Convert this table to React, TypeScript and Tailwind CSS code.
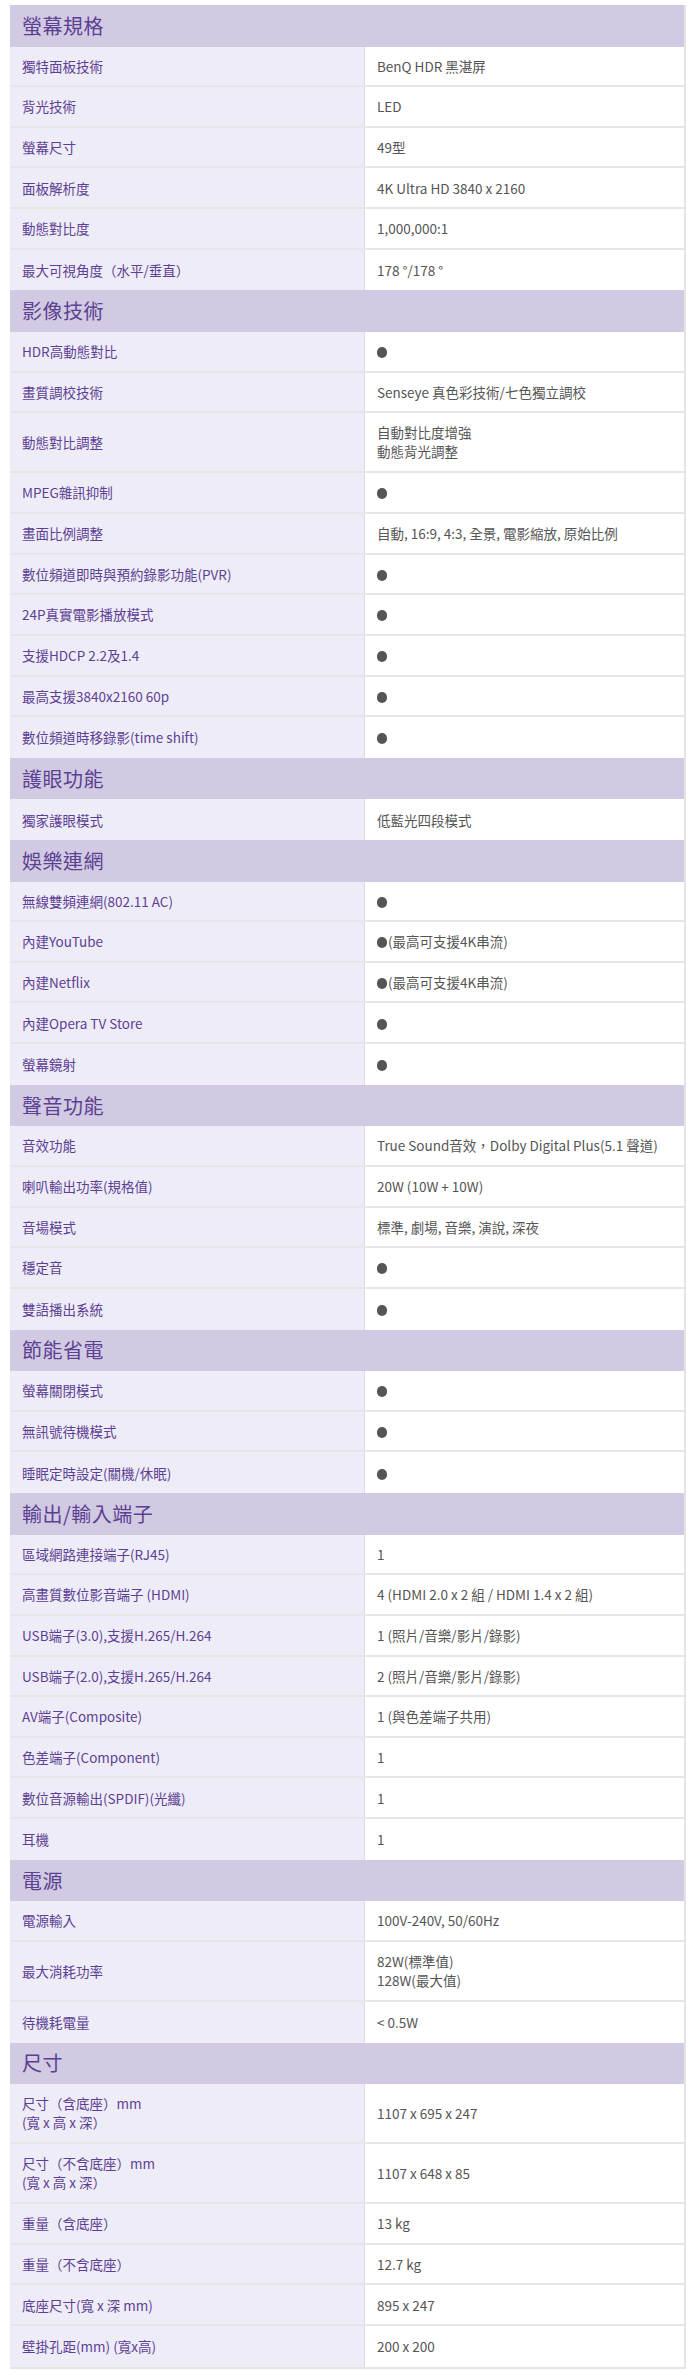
import React from "react";

const DOT = "__DOT__";
type Cell = string | string[];
type Row = [Cell, Cell];
type Section = { title: string; rows: Row[] };

const sections: Section[] = [
  {
    title: "螢幕規格",
    rows: [
      ["獨特面板技術", "BenQ HDR 黑湛屏"],
      ["背光技術", "LED"],
      ["螢幕尺寸", "49型"],
      ["面板解析度", "4K Ultra HD 3840 x 2160"],
      ["動態對比度", "1,000,000:1"],
      ["最大可視角度（水平/垂直）", "178 °/178 °"],
    ],
  },
  {
    title: "影像技術",
    rows: [
      ["HDR高動態對比", DOT],
      ["畫質調校技術", "Senseye 真色彩技術/七色獨立調校"],
      ["動態對比調整", ["自動對比度增強", "動態背光調整"]],
      ["MPEG雜訊抑制", DOT],
      ["畫面比例調整", "自動, 16:9, 4:3, 全景, 電影縮放, 原始比例"],
      ["數位頻道即時與預約錄影功能(PVR)", DOT],
      ["24P真實電影播放模式", DOT],
      ["支援HDCP 2.2及1.4", DOT],
      ["最高支援3840x2160 60p", DOT],
      ["數位頻道時移錄影(time shift)", DOT],
    ],
  },
  {
    title: "護眼功能",
    rows: [["獨家護眼模式", "低藍光四段模式"]],
  },
  {
    title: "娛樂連網",
    rows: [
      ["無線雙頻連網(802.11 AC)", DOT],
      ["內建YouTube", DOT + "(最高可支援4K串流)"],
      ["內建Netflix", DOT + "(最高可支援4K串流)"],
      ["內建Opera TV Store", DOT],
      ["螢幕鏡射", DOT],
    ],
  },
  {
    title: "聲音功能",
    rows: [
      ["音效功能", "True Sound音效，Dolby Digital Plus(5.1 聲道)"],
      ["喇叭輸出功率(規格值)", "20W (10W + 10W)"],
      ["音場模式", "標準, 劇場, 音樂, 演說, 深夜"],
      ["穩定音", DOT],
      ["雙語播出系統", DOT],
    ],
  },
  {
    title: "節能省電",
    rows: [
      ["螢幕關閉模式", DOT],
      ["無訊號待機模式", DOT],
      ["睡眠定時設定(關機/休眠)", DOT],
    ],
  },
  {
    title: "輸出/輸入端子",
    rows: [
      ["區域網路連接端子(RJ45)", "1"],
      ["高畫質數位影音端子 (HDMI)", "4 (HDMI 2.0 x 2 組 / HDMI 1.4 x 2 組)"],
      ["USB端子(3.0),支援H.265/H.264", "1 (照片/音樂/影片/錄影)"],
      ["USB端子(2.0),支援H.265/H.264", "2 (照片/音樂/影片/錄影)"],
      ["AV端子(Composite)", "1 (與色差端子共用)"],
      ["色差端子(Component)", "1"],
      ["數位音源輸出(SPDIF)(光纖)", "1"],
      ["耳機", "1"],
    ],
  },
  {
    title: "電源",
    rows: [
      ["電源輸入", "100V-240V, 50/60Hz"],
      ["最大消耗功率", ["82W(標準值)", "128W(最大值)"]],
      ["待機耗電量", "< 0.5W"],
    ],
  },
  {
    title: "尺寸",
    rows: [
      [["尺寸（含底座）mm", "(寬 x 高 x 深）"], "1107 x 695 x 247"],
      [["尺寸（不含底座）mm", "(寬 x 高 x 深）"], "1107 x 648 x 85"],
      ["重量（含底座）", "13 kg"],
      ["重量（不含底座）", "12.7 kg"],
      ["底座尺寸(寬 x 深 mm)", "895 x 247"],
      ["壁掛孔距(mm) (寬x高)", "200 x 200"],
    ],
  },
];

function Dot() {
  return (
    <span className="inline-block w-[10px] h-[11px] rounded-full bg-[#555] align-[-1px] mr-[1px]" />
  );
}

function Text({ value }: { value: string }) {
  if (value.startsWith(DOT)) {
    const rest = value.slice(DOT.length);
    return (
      <span>
        <Dot />
        {rest}
      </span>
    );
  }
  return <span>{value}</span>;
}

function CellContent({ cell }: { cell: Cell }) {
  if (Array.isArray(cell)) {
    return (
      <div className="flex flex-col leading-[19px]">
        {cell.map((l, i) => (
          <div key={i}>
            <Text value={l} />
          </div>
        ))}
      </div>
    );
  }
  return <Text value={cell} />;
}

export default function App() {
  return (
    <div
      className="bg-white pt-[5px] pl-[10px] pb-[9px] w-[700px]"
      style={{ fontFamily: '"Noto Sans CJK TC", "Noto Sans", sans-serif' }}
    >
      <div className="w-[676px] flex flex-col border-r-2 border-b-2 border-[#e4e4e4]">
        {sections.map((s) => (
          <div key={s.title} className="flex flex-col">
            <div className="h-[41.5px] bg-[#d2c9e3] flex items-center pl-[12px] text-[20px] text-[#5b4191] tracking-[0.5px]">
              {s.title}
            </div>
            {s.rows.map((r, i) => {
              const tall = Array.isArray(r[0]) || Array.isArray(r[1]);
              const last = i === s.rows.length - 1;
              return (
                <div
                  key={i}
                  className={`flex text-[13.5px] ${tall ? "h-[60px]" : "h-[40.67px]"} ${
                    last ? "" : "border-b-2 border-[#e6e6e9]"
                  }`}
                >
                  <div className="w-[355px] bg-[#eeecf6] flex items-center pl-[12px] text-[#5d3f95] border-r border-[#dcdae4]">
                    <CellContent cell={r[0]} />
                  </div>
                  <div className="flex-1 bg-white flex items-center pl-[12px] text-[#555555]">
                    <CellContent cell={r[1]} />
                  </div>
                </div>
              );
            })}
          </div>
        ))}
      </div>
    </div>
  );
}
